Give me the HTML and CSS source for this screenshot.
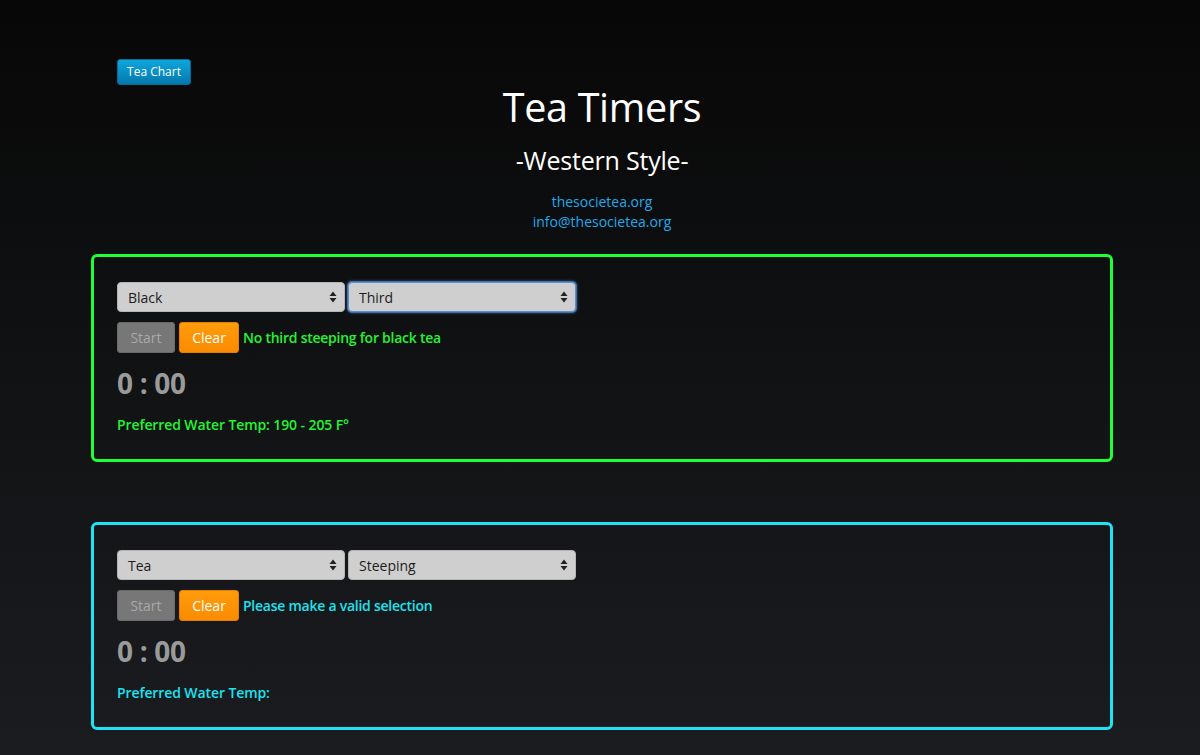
FILE: index.html
```html
<!DOCTYPE html>
<html>
<head>
<meta charset="utf-8">
<link rel="stylesheet" href="styles.css">
</head>
<body>
<div class="page">
  <div class="top">
    <button class="btn-chart">Tea Chart</button>
  </div>
  <header class="header">
    <h1 class="title">Tea Timers</h1>
    <h2 class="subtitle">-Western Style-</h2>
    <div class="links">
      <a class="link" href="#">thesocietea.org</a>
      <a class="link" href="#">info@thesocietea.org</a>
    </div>
  </header>

  <section class="panel panel-green">
    <div class="selects">
      <div class="select">
        <span class="select-text">Black</span>
        <svg class="arrows" width="8" height="12" viewBox="0 0 8 12"><path d="M4 0.5 L7.5 5 H0.5 Z M4 11.5 L7.5 7 H0.5 Z" fill="#222"/></svg>
      </div>
      <div class="select focused">
        <span class="select-text">Third</span>
        <svg class="arrows" width="8" height="12" viewBox="0 0 8 12"><path d="M4 0.5 L7.5 5 H0.5 Z M4 11.5 L7.5 7 H0.5 Z" fill="#222"/></svg>
      </div>
    </div>
    <div class="controls">
      <button class="btn btn-start">Start</button>
      <button class="btn btn-clear">Clear</button>
      <span class="msg msg-green">No third steeping for black tea</span>
    </div>
    <div class="timer">0 : 00</div>
    <div class="temp temp-green">Preferred Water Temp: 190 - 205 F°</div>
  </section>

  <section class="panel panel-cyan">
    <div class="selects">
      <div class="select">
        <span class="select-text">Tea</span>
        <svg class="arrows" width="8" height="12" viewBox="0 0 8 12"><path d="M4 0.5 L7.5 5 H0.5 Z M4 11.5 L7.5 7 H0.5 Z" fill="#222"/></svg>
      </div>
      <div class="select">
        <span class="select-text">Steeping</span>
        <svg class="arrows" width="8" height="12" viewBox="0 0 8 12"><path d="M4 0.5 L7.5 5 H0.5 Z M4 11.5 L7.5 7 H0.5 Z" fill="#222"/></svg>
      </div>
    </div>
    <div class="controls">
      <button class="btn btn-start">Start</button>
      <button class="btn btn-clear">Clear</button>
      <span class="msg msg-cyan">Please make a valid selection</span>
    </div>
    <div class="timer">0 : 00</div>
    <div class="temp temp-cyan">Preferred Water Temp:</div>
  </section>
</div>
</body>
</html>
```

FILE: styles.css
```css
* { box-sizing: border-box; }
html, body { height: 100%; }
body {
  margin: 0;
  background: linear-gradient(to bottom, #070707 0%, #101113 45%, #1a1c1f 100%);
  font-family: "Open Sans", "DejaVu Sans", sans-serif;
  color: #fff;
  min-height: 755px;
  overflow: hidden;
}
.page {
  width: 1022px;
  margin-left: 91px;
  padding-top: 59px;
}
.top { padding-left: 26px; height: 25px; }
.btn-chart {
  display: block;
  height: 26px;
  width: 74px;
  padding: 0;
  border: 1px solid #056b98;
  border-radius: 3px;
  background: linear-gradient(to bottom, #0ea6dc, #0478ad);
  color: #fff;
  font-family: "Open Sans", sans-serif;
  font-size: 12px;
  line-height: 24px;
}
.header { text-align: center; }
.title {
  margin: 0;
  margin-top: -2px;
  font-weight: 400;
  font-size: 39.5px;
  line-height: 50px;
  letter-spacing: -0.3px;
}
.subtitle {
  margin: 0;
  margin-top: 11px;
  font-weight: 400;
  font-size: 25px;
  line-height: 34px;
  letter-spacing: -0.2px;
}
.links {
  margin-top: 15px;
  display: flex;
  flex-direction: column;
  align-items: center;
}
.link {
  color: #20aaec;
  text-decoration: none;
  font-size: 14px;
  line-height: 20px;
}
.panel {
  border: 3px solid;
  border-radius: 6px;
  height: 208px;
  padding: 25px 23px 0 23px;
  margin-top: 22px;
}
.panel-green { border-color: #1fff32; }
.panel-cyan { border-color: #1fe2f3; margin-top: 60px; }
.selects { display: flex; gap: 3px; }
.select {
  position: relative;
  width: 228px;
  height: 30px;
  background: #cfcfcf;
  border: 1px solid #b5b5b5;
  border-radius: 4px;
  display: flex;
  align-items: center;
  padding-left: 10px;
}
.select.focused {
  border: 1px solid #5f8fcb;
  box-shadow: 0 0 0 1px #3d6fae, 0 0 3px 1px rgba(90,140,210,0.6);
}
.select-text {
  color: #1c1c1c;
  font-size: 14px;
}
.arrows { position: absolute; right: 7px; top: 8px; }
.controls {
  display: flex;
  align-items: center;
  gap: 4px;
  margin-top: 10px;
}
.btn {
  height: 31px;
  padding: 0;
  border-radius: 3px;
  font-family: "Open Sans", sans-serif;
  font-size: 14px;
}
.btn-start {
  width: 58px;
  background: #777;
  border: 1px solid #6a6a6a;
  color: #a8a8a8;
}
.btn-clear {
  width: 60px;
  background: linear-gradient(to bottom, #ff9c0a, #fb8b00);
  border: 1px solid #e57f00;
  color: #fff;
}
.msg {
  font-size: 14px;
  font-weight: 600;
  letter-spacing: -0.25px;
}
.msg-green, .temp-green { color: #23f432; }
.msg-cyan, .temp-cyan { color: #1de2f0; }
.timer {
  margin-top: 13px;
  color: #9a9a9a;
  font-weight: 700;
  font-size: 28px;
  line-height: 34px;
  letter-spacing: -0.3px;
}
.temp {
  margin-top: 15px;
  font-size: 14px;
  font-weight: 600;
  letter-spacing: -0.1px;
}
```
